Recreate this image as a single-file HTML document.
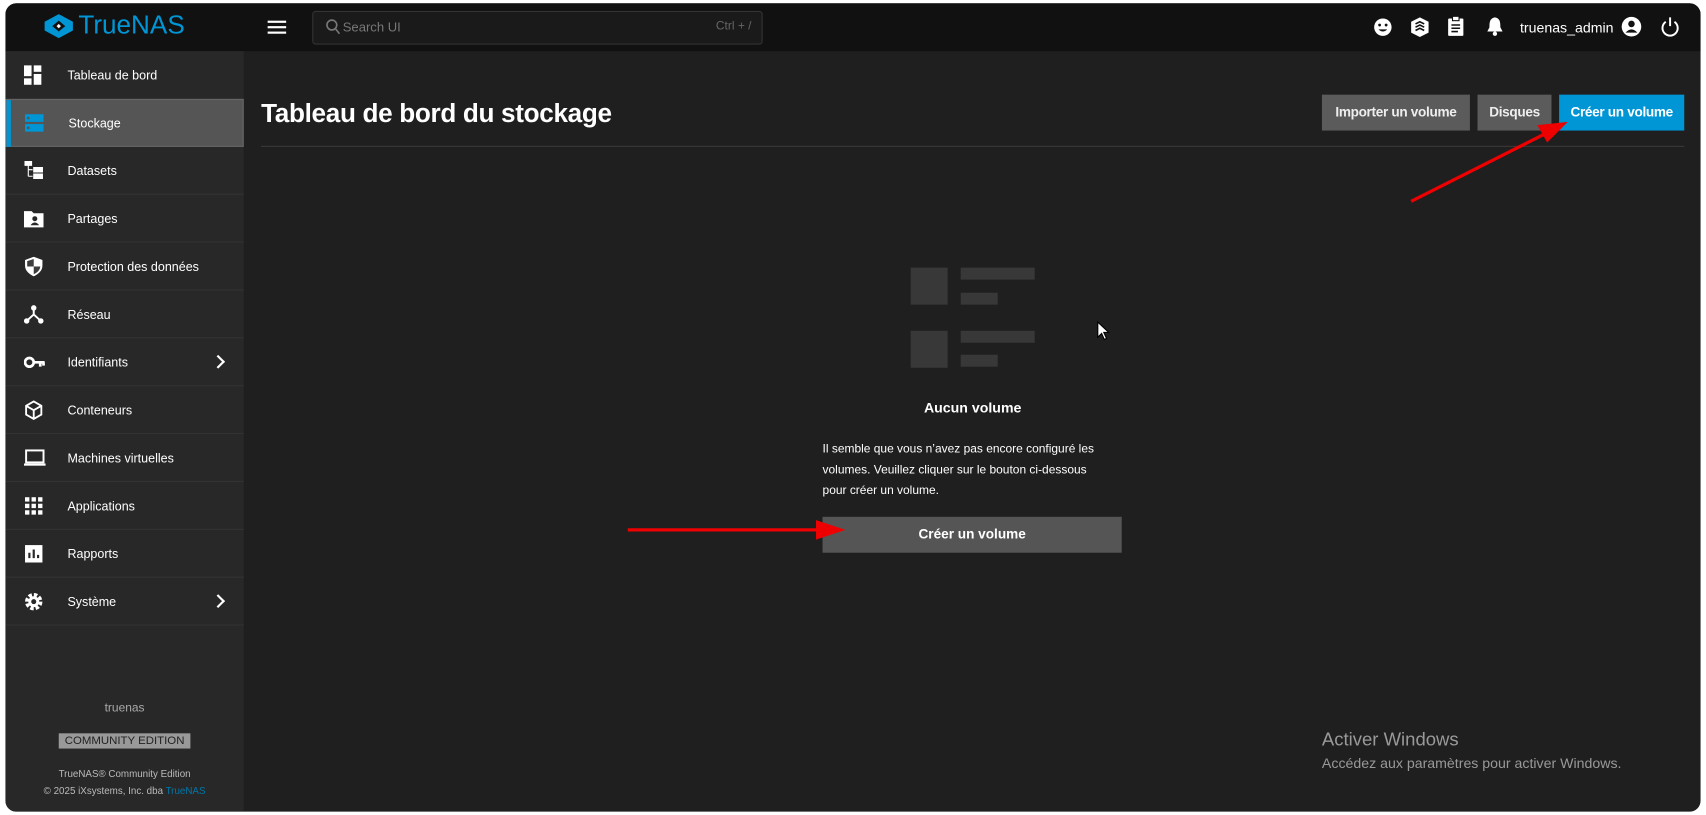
<!DOCTYPE html>
<html><head><meta charset="utf-8"><style>
html,body{margin:0;padding:0;width:1706px;height:815px;overflow:hidden;background:#fff;}
#s{position:absolute;left:0;top:0;width:1568px;height:749px;transform:scale(1.08801);transform-origin:0 0;font-family:"Liberation Sans",sans-serif;}
.win{position:absolute;left:5px;top:3px;width:1558px;height:743px;background:#1f1f1f;border-radius:10px;overflow:hidden;}
.top{position:absolute;left:0;top:0;width:1558px;height:44px;background:#111;}
.side{position:absolute;left:0;top:44px;width:219px;height:699px;background:#282828;}
.it{position:absolute;left:0;width:219px;height:43px;border-bottom:1px solid #333;color:#fff;font-size:11.5px;}
.it span{position:absolute;left:57px;top:17px;}
.it svg{position:absolute;left:17px;top:13px;}
.btn{position:absolute;top:84px;height:33px;color:#eee;font-weight:bold;font-size:12.5px;text-align:center;line-height:33px;letter-spacing:-0.3px;}
.g{position:absolute;background:#383838;}
</style></head><body><div id="s">
<div class="win">
<div class="top">
 <svg style="position:absolute;left:35px;top:9px" width="28" height="24" viewBox="0 0 28 24"><path d="M14 1 L27 8 L27 16 L14 23 L1 16 L1 8Z" fill="#0095d5"/><path d="M14 7 L20 12 L14 17 L8 12Z" fill="#111"/><path d="M14 10 L16 12 L14 14 L12 12Z" fill="#fff"/></svg>
 <div style="position:absolute;left:67px;top:7px;color:#0095d5;font-size:24px">TrueNAS</div>
 <div style="position:absolute;left:241px;top:16px;width:17px;height:2px;background:#fff;box-shadow:0 5px 0 #fff,0 10px 0 #fff"></div>
 <div style="position:absolute;left:282px;top:7px;width:412px;height:29px;background:#1a1a1a;border:1px solid #333;border-radius:3px"></div>
 <svg style="position:absolute;left:294px;top:14px" width="14" height="16"><circle cx="6" cy="6" r="4.5" stroke="#777" stroke-width="1.5" fill="none"/><path d="M9 9 L13 14" stroke="#777" stroke-width="1.5"/></svg>
 <div style="position:absolute;left:310px;top:15px;color:#777;font-size:12px">Search UI</div>
 <div style="position:absolute;left:653px;top:15px;color:#666;font-size:11px">Ctrl + /</div>
 <svg style="position:absolute;left:1257px;top:13px" width="18" height="18"><circle cx="9" cy="9" r="8" fill="#fff"/><circle cx="6" cy="7" r="1.3" fill="#111"/><circle cx="12" cy="7" r="1.3" fill="#111"/><path d="M5 11 Q9 15 13 11Z" fill="#111"/></svg>
 <svg style="position:absolute;left:1291px;top:12px" width="18" height="20"><path d="M9 1 L17 5 L17 15 L9 19 L1 15 L1 5Z" fill="#fff"/><path d="M5 7 L9 5 L13 7 M5 10 L9 8 L13 10 M5 13 L9 11 L13 13" stroke="#111" stroke-width="1.5" fill="none"/></svg>
 <svg style="position:absolute;left:1325px;top:11px" width="16" height="20"><rect x="1" y="3" width="14" height="16" rx="1" fill="#fff"/><rect x="5" y="1" width="6" height="4" fill="#fff" stroke="#111"/><path d="M4 9h8M4 12h8M4 15h6" stroke="#111" stroke-width="1.4"/></svg>
 <svg style="position:absolute;left:1361px;top:11px" width="16" height="20"><path d="M8 2 C3 3 3 7 3 11 L1 15 L15 15 L13 11 C13 7 13 3 8 2Z" fill="#fff"/><circle cx="8" cy="17" r="2" fill="#fff"/></svg>
 <div style="position:absolute;left:1392px;top:15px;color:#fff;font-size:13px">truenas_admin</div>
 <svg style="position:absolute;left:1485px;top:12px" width="19" height="19"><circle cx="9.5" cy="9.5" r="9" fill="#fff"/><circle cx="9.5" cy="7" r="3" fill="#111"/><path d="M4 15 Q9.5 9 15 15" fill="#111"/></svg>
 <svg style="position:absolute;left:1521px;top:12px" width="18" height="19"><path d="M5 5 A7 7 0 1 0 13 5" stroke="#fff" stroke-width="1.8" fill="none"/><path d="M9 1 V9" stroke="#fff" stroke-width="1.8"/></svg>
</div>
<div class="side">
 <div class="it" style="top:0"><svg width="18" height="18"><rect x="0" y="0" width="7" height="10" fill="#fff"/><rect x="9" y="0" width="7" height="6" fill="#fff"/><rect x="9" y="8" width="7" height="10" fill="#fff"/><rect x="0" y="12" width="7" height="6" fill="#fff"/></svg><span>Tableau de bord</span></div>
 <div class="it" style="top:44px;background:#555;border:1px solid #666;box-sizing:border-box;height:44px"><div style="position:absolute;left:0;top:0;width:4px;height:43px;background:#0095d5"></div><svg width="18" height="18" style="top:12px"><rect x="0" y="1" width="17" height="7" fill="#0095d5"/><rect x="0" y="10" width="17" height="7" fill="#0095d5"/><circle cx="3" cy="4.5" r="1.2" fill="#555"/><circle cx="3" cy="13.5" r="1.2" fill="#555"/></svg><span style="top:16px">Stockage</span></div>
 <div class="it" style="top:88px"><svg width="18" height="18"><path d="M1 0h6v4H1zM4 4v10M4 8h4M4 14h4M9 6h8v4H9zM9 12h8v4H9z" fill="#fff" stroke="#fff" stroke-width="1"/></svg><span>Datasets</span></div>
 <div class="it" style="top:132px"><svg width="18" height="18"><path d="M0 2h7l2 2h9v13H0z" fill="#fff"/><circle cx="10" cy="9" r="2.3" fill="#282828"/><path d="M6 15 Q10 10 14 15Z" fill="#282828"/></svg><span>Partages</span></div>
 <div class="it" style="top:176px"><svg width="18" height="18"><path d="M9 0 L17 3 V8 C17 13 13 16 9 18 C5 16 1 13 1 8 V3Z" fill="#fff"/><path d="M9 2 V9 H15 C15 12 12 15 9 16 Z M9 9 H3 V4 L9 2Z" fill="#282828" opacity=".9"/></svg><span>Protection des données</span></div>
 <div class="it" style="top:220px"><svg width="18" height="18"><circle cx="9" cy="3" r="2.5" fill="#fff"/><circle cx="2.5" cy="15" r="2.5" fill="#fff"/><circle cx="15.5" cy="15" r="2.5" fill="#fff"/><path d="M9 3V9L2.5 15M9 9L15.5 15" stroke="#fff" stroke-width="1.8" fill="none"/></svg><span>Réseau</span></div>
 <div class="it" style="top:264px"><svg width="20" height="18"><circle cx="5" cy="9" r="4" stroke="#fff" stroke-width="2.5" fill="none"/><path d="M9 9H19M15 9V13M18 9V12" stroke="#fff" stroke-width="2.5"/></svg><span>Identifiants</span><div style="position:absolute;left:191px;top:17px;width:7px;height:7px;border-top:2px solid #fff;border-right:2px solid #fff;transform:rotate(45deg)"></div></div>
 <div class="it" style="top:308px"><svg width="18" height="18"><path d="M9 1 L16 5 V13 L9 17 L2 13 V5Z M2 5 L9 9 L16 5 M9 9 V17" stroke="#fff" stroke-width="1.7" fill="none"/></svg><span>Conteneurs</span></div>
 <div class="it" style="top:352px"><svg width="20" height="18"><rect x="2" y="2" width="16" height="11" stroke="#fff" stroke-width="1.8" fill="none"/><rect x="0" y="14" width="20" height="2" fill="#fff"/></svg><span>Machines virtuelles</span></div>
 <div class="it" style="top:396px"><svg width="18" height="18"><g fill="#fff"><rect x="1" y="1" width="4" height="4"/><rect x="7" y="1" width="4" height="4"/><rect x="13" y="1" width="4" height="4"/><rect x="1" y="7" width="4" height="4"/><rect x="7" y="7" width="4" height="4"/><rect x="13" y="7" width="4" height="4"/><rect x="1" y="13" width="4" height="4"/><rect x="7" y="13" width="4" height="4"/><rect x="13" y="13" width="4" height="4"/></g></svg><span>Applications</span></div>
 <div class="it" style="top:440px"><svg width="18" height="18"><rect x="1" y="1" width="16" height="16" fill="#fff"/><path d="M5 13V8M9 13V5M13 13V10" stroke="#282828" stroke-width="2"/></svg><span>Rapports</span></div>
 <div class="it" style="top:484px"><svg width="18" height="18"><circle cx="9" cy="9" r="6" stroke="#fff" stroke-width="4" stroke-dasharray="3 1.7" fill="none"/><circle cx="9" cy="9" r="5" fill="#fff"/><circle cx="9" cy="9" r="2.3" fill="#282828"/></svg><span>Système</span><div style="position:absolute;left:191px;top:17px;width:7px;height:7px;border-top:2px solid #fff;border-right:2px solid #fff;transform:rotate(45deg)"></div></div>
 <div style="position:absolute;left:0;width:219px;top:598px;text-align:center;color:#aaa;font-size:11px">truenas</div>
 <div style="position:absolute;left:49px;top:627px;width:121px;height:14px;background:#999;color:#222;font-size:10.5px;text-align:center;line-height:14px">COMMUNITY EDITION</div>
 <div style="position:absolute;left:0;width:219px;top:659px;text-align:center;color:#bbb;font-size:9px">TrueNAS® Community Edition</div>
 <div style="position:absolute;left:0;width:219px;top:675px;text-align:center;color:#bbb;font-size:9px">© 2025 iXsystems, Inc. dba <span style="color:#0077aa">TrueNAS</span></div>
</div>
<div style="position:absolute;left:235px;top:88px;color:#fff;font-size:24px;font-weight:bold;letter-spacing:-0.3px">Tableau de bord du stockage</div>
<div style="position:absolute;left:235px;top:131px;width:1308px;height:1px;background:#3a3a3a"></div>
<div class="btn" style="left:1210px;width:136px;background:#5b5b5b">Importer un volume</div>
<div class="btn" style="left:1353px;width:68px;background:#5b5b5b">Disques</div>
<div class="btn" style="left:1428px;width:115px;background:#0095d5;color:#fff">Créer un volume</div>
<div class="g" style="left:832px;top:243px;width:34px;height:34px"></div>
<div class="g" style="left:878px;top:243px;width:68px;height:11px"></div>
<div class="g" style="left:878px;top:266px;width:34px;height:11px"></div>
<div class="g" style="left:832px;top:301px;width:34px;height:34px"></div>
<div class="g" style="left:878px;top:301px;width:68px;height:11px"></div>
<div class="g" style="left:878px;top:323px;width:34px;height:11px"></div>
<div style="position:absolute;left:751px;width:276px;top:364px;text-align:center;color:#fff;font-weight:bold;font-size:13px">Aucun volume</div>
<div style="position:absolute;left:751px;width:258px;top:401px;color:#fff;font-size:11px;line-height:19px">Il semble que vous n’avez pas encore configuré les volumes. Veuillez cliquer sur le bouton ci-dessous pour créer un volume.</div>
<div style="position:absolute;left:751px;top:472px;width:275px;height:33px;background:#555;color:#fff;font-weight:bold;font-size:12.5px;text-align:center;line-height:33px">Créer un volume</div>
<svg style="position:absolute;left:1003px;top:292px" width="14" height="20"><path d="M1 1 V15 L4.5 11.5 L7 17 L9 16 L6.5 10.5 L11 10.5Z" fill="#fff" stroke="#000" stroke-width="1"/></svg>
<div style="position:absolute;left:1210px;top:667px;color:#999;font-size:17px">Activer Windows</div>
<div style="position:absolute;left:1210px;top:691px;color:#999;font-size:13px">Accédez aux paramètres pour activer Windows.</div>
</div>
<svg style="position:absolute;left:0;top:0" width="1568" height="749"><g stroke="#e00" stroke-width="3" fill="#e00"><path d="M577 487 H755"/><path d="M777 487 L750 478 L750 496Z" stroke="none"/><path d="M1297 185 L1420 123"/><path d="M1441 112 L1413 115 L1422 131Z" stroke="none"/></g></svg>
</div></body></html>
